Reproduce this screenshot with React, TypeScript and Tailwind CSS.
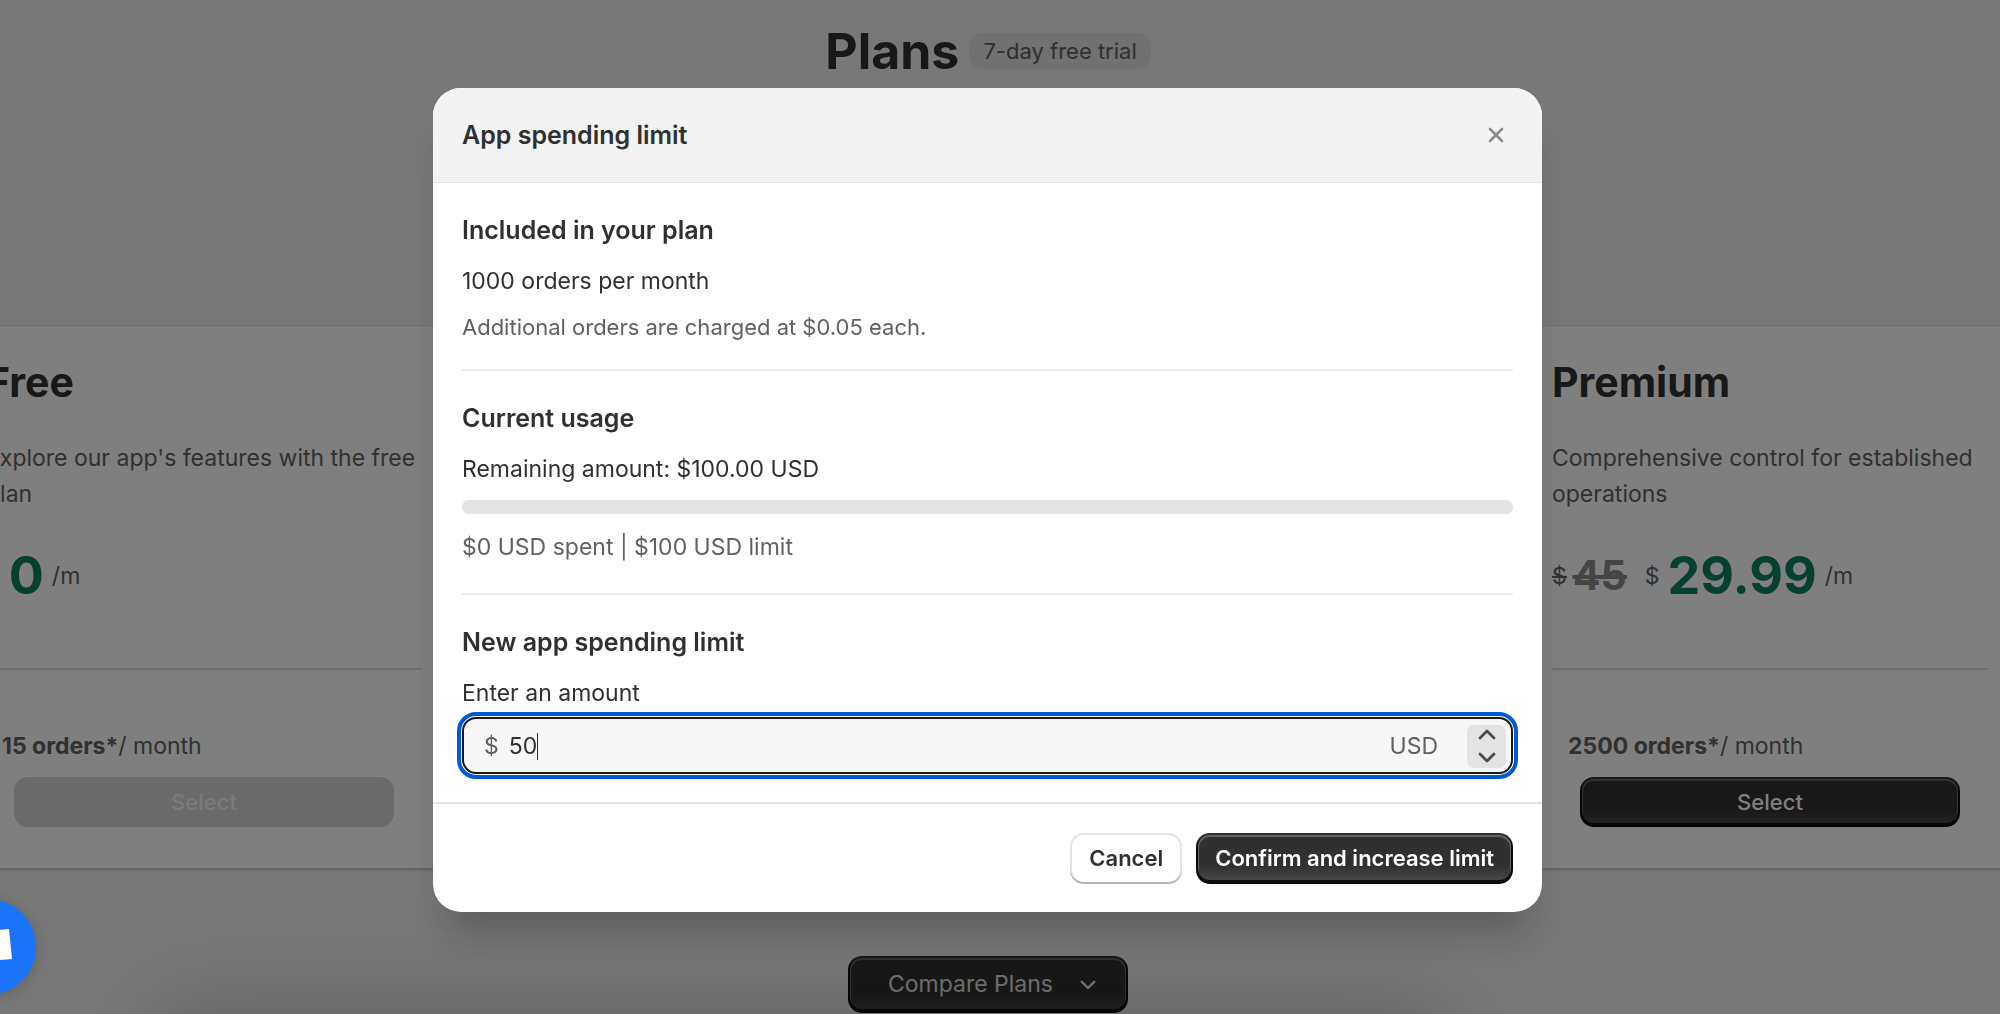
import { useState } from "react";
import type { ReactNode } from "react";

interface PlanCardProps {
  name: string;
  description: string;
  price: string;
  oldPrice?: string;
  orders: string;
  disabled?: boolean;
}

const darkButton =
  "bg-[#303030] bg-linear-to-b from-transparent from-65% to-white/15 shadow-[inset_0_-2px_0_2px_rgba(0,0,0,0.8),inset_0_0_0_2px_#303030,inset_0_1px_0_3px_rgba(255,255,255,0.25)]";

function Chevron({ up, className }: { up?: boolean; className?: string }) {
  return (
    <svg viewBox="0 0 18 11" fill="none" className={className}>
      <path
        d={up ? "M2 9 L9 2 L16 9" : "M2 2 L9 9 L16 2"}
        stroke="currentColor"
        strokeWidth="2.8"
        strokeLinecap="round"
        strokeLinejoin="round"
      />
    </svg>
  );
}

function PlanCard({
  name,
  description,
  price,
  oldPrice,
  orders,
  disabled,
}: PlanCardProps) {
  return (
    <section className="w-[468px] shrink-0 rounded-md bg-white px-4 pt-7 pb-[41px] shadow-[0_2px_0_#cccccc,0_-1px_0_#dddddd,0_3px_2px_rgba(0,0,0,0.08)]">
      <h2 className="text-[41px] leading-[57px] font-bold text-[#303030]">
        {name}
      </h2>
      <p className="mt-[29px] text-[23px] leading-9 text-[#616161]">
        {description}
      </p>
      <div className="mt-7 flex h-[72px] items-center text-[23px] text-[#616161]">
        {oldPrice && (
          <s className="mr-[18px] flex items-center gap-[6px]">
            <span className="line-through">$</span>
            <span className="text-[41px] font-bold text-[#8a8a8a] line-through">
              {oldPrice}
            </span>
          </s>
        )}
        <span>$</span>
        <span className="mx-2 text-[52px] font-bold text-[#0c8060]">
          {price}
        </span>
        <span>/m</span>
      </div>
      <hr className="mt-14 border-t-2 border-[#dddddd]" />
      <p className="mt-[58px] pl-4 text-[23px] leading-9 text-[#616161]">
        <b className="font-bold">{orders} orders*</b>/ month
      </p>
      <div className="mt-[13px] px-7">
        <button
          type="button"
          disabled={disabled}
          className={
            disabled
              ? "h-[50px] w-full rounded-[14px] bg-[#d4d4d4] text-[22px] font-medium text-[#f6f6f6]"
              : `h-[50px] w-full rounded-[14px] text-[22px] font-medium text-white ${darkButton}`
          }
        >
          Select
        </button>
      </div>
    </section>
  );
}

function ModalSection({
  title,
  children,
}: {
  title: string;
  children: ReactNode;
}) {
  return (
    <section className="pt-[29px] pb-7">
      <h3 className="text-[25px] leading-9 font-semibold">{title}</h3>
      {children}
    </section>
  );
}

function SpendingLimitModal() {
  const [amount, setAmount] = useState("50");

  const step = (delta: number) =>
    setAmount(String(Math.max(0, Number(amount) + delta)));

  return (
    <div
      role="dialog"
      aria-modal="true"
      aria-labelledby="limit-title"
      className="w-[1109px] max-w-full overflow-hidden rounded-[28px] bg-white text-[#303030] shadow-[0_36px_36px_-14px_rgba(26,26,26,0.28)]"
    >
      <header className="flex items-center justify-between border-b border-[#e3e3e3] bg-[#f3f3f3] py-[29px] pr-[38px] pl-[29px]">
        <h2 id="limit-title" className="text-[25px] leading-9 font-semibold">
          App spending limit
        </h2>
        <button type="button" aria-label="Close" className="text-[#8a8a8a]">
          <svg viewBox="0 0 16 16" fill="none" className="h-4 w-4">
            <path
              d="M2 2 L14 14 M14 2 L2 14"
              stroke="currentColor"
              strokeWidth="2.6"
              strokeLinecap="round"
            />
          </svg>
        </button>
      </header>

      <div className="divide-y-2 divide-[#ebebeb] px-[29px]">
        <ModalSection title="Included in your plan">
          <p className="mt-[15px] text-[23px] leading-9">
            1000 orders per month
          </p>
          <p className="mt-[14px] text-[22px] leading-7 text-[#616161]">
            Additional orders are charged at $0.05 each.
          </p>
        </ModalSection>
        <ModalSection title="Current usage">
          <p className="mt-[15px] text-[23px] leading-9">
            Remaining amount: $100.00 USD
          </p>
          <div
            role="progressbar"
            aria-label="Current usage"
            aria-valuenow={0}
            className="mt-[13px] h-[14px] rounded-[7px] bg-[#e3e3e3]"
          />
          <p className="mt-[15px] text-[23px] leading-9 text-[#616161]">
            $0 USD spent | $100 USD limit
          </p>
        </ModalSection>
        <ModalSection title="New app spending limit">
          <label
            htmlFor="amount"
            className="mt-[15px] block text-[23px] leading-9"
          >
            Enter an amount
          </label>
          <div className="mt-[6px] flex h-[57px] items-center rounded-[14px] border-2 border-[#1a1a1a] bg-[#f7f7f7] pt-[2px] pr-[5px] pl-5 text-[23px] outline-4 outline-offset-1 outline-[#005bd3]">
            <span className="text-[#616161]">$</span>
            <input
              id="amount"
              inputMode="decimal"
              value={amount}
              onChange={(e) => setAmount(e.target.value)}
              className="ml-[10px] field-sizing-content bg-transparent caret-transparent outline-none"
            />
            {/* text cursor */}
            <span className="h-[27px] w-px bg-[#303030]" />
            <span className="mr-[29px] ml-auto text-[#616161]">USD</span>
            <div className="flex h-[43px] w-[39px] flex-col gap-[3px] rounded-[7px] bg-[#e3e3e3] text-[#4a4a4a]">
              <button
                type="button"
                aria-label="Increase amount"
                onClick={() => step(1)}
                className="flex flex-1 items-center justify-center"
              >
                <Chevron up className="w-[18px]" />
              </button>
              <button
                type="button"
                aria-label="Decrease amount"
                onClick={() => step(-1)}
                className="flex flex-1 items-center justify-center"
              >
                <Chevron className="w-[18px]" />
              </button>
            </div>
          </div>
        </ModalSection>
      </div>

      <footer className="flex justify-end gap-[14px] border-t-2 border-[#e3e3e3] px-[29px] pt-[29px] pb-7">
        <button
          type="button"
          className="h-[51px] rounded-[14px] bg-white px-[19px] text-[22px] font-semibold shadow-[inset_0_-2px_0_#b5b5b5,inset_0_0_0_2px_#e3e3e3]"
        >
          Cancel
        </button>
        <button
          type="button"
          className={`h-[51px] rounded-[14px] px-[19px] text-[22px] font-semibold text-white ${darkButton}`}
        >
          Confirm and increase limit
        </button>
      </footer>
    </div>
  );
}

export default function App() {
  return (
    <div className="relative h-screen overflow-hidden bg-[#f1f1f1] pt-[15px] pr-6 font-['Inter',sans-serif]">
      <header className="flex items-center justify-center gap-[10px]">
        <h1 className="text-[50px] leading-[72px] font-bold text-[#303030]">
          Plans
        </h1>
        <span className="rounded-[14px] bg-black/6 px-[14px] text-[22px] leading-9 text-[#616161]">
          7-day free trial
        </span>
      </header>

      <main className="-mr-7 -ml-[30px] mt-[239px] flex justify-between">
        <PlanCard
          name="Free"
          description="Explore our app's features with the free plan"
          price="0"
          orders="15"
          disabled
        />
        <PlanCard
          name="Premium"
          description="Comprehensive control for established operations"
          price="29.99"
          oldPrice="45"
          orders="2500"
        />
      </main>

      <div className="mt-[88px] flex justify-center">
        <button
          type="button"
          className={`flex h-[57px] items-center gap-[27px] rounded-[14px] pr-8 pl-10 text-[23px] text-[#e3e3e3] ${darkButton}`}
        >
          Compare Plans
          <Chevron className="w-4" />
        </button>
      </div>

      <div className="absolute top-full right-[560px] left-40 h-24 shadow-[0_0_90px_rgba(0,0,0,0.2)]" />

      <div className="fixed inset-0 flex items-center justify-center bg-black/50 pr-[25px] pb-[15px]">
        <SpendingLimitModal />
      </div>

      <button
        type="button"
        aria-label="Open chat"
        className="fixed bottom-[19px] -left-[60px] h-24 w-24 rounded-full bg-[#1a73f8] shadow-[0_2px_14px_rgba(0,0,0,0.2)]"
      >
        <svg viewBox="0 0 96 96" className="h-24 w-24">
          <path d="M24 34 L69 30 L72 60 L26 64 Z" fill="#ffffff" />
        </svg>
      </button>
    </div>
  );
}
